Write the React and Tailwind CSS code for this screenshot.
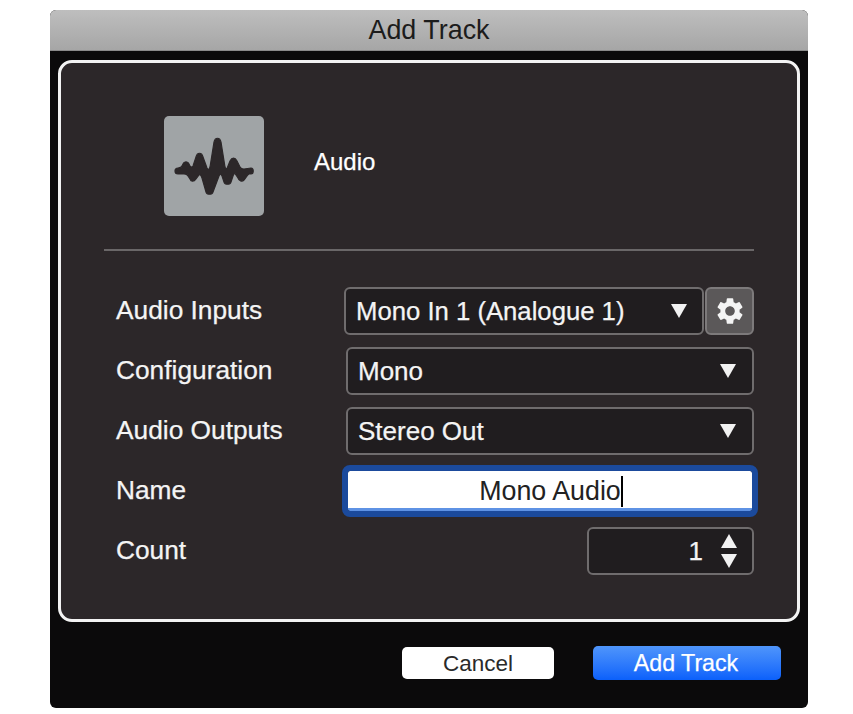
import React from 'react';
import { MdSettings } from 'react-icons/md';

const Caret = ({ className = '' }) => (
  <svg viewBox="0 0 16 14" className={`w-4 h-[14px] fill-[#f2f2f2] ${className}`}>
    <path d="M0 0H16L8 14Z" />
  </svg>
);

const Select = ({ value, className = '' }) => (
  <div className={`h-12 flex items-center justify-between pl-[10px] pr-4 bg-[#201d1f] border-2 border-[#6f6c6d] rounded-md text-[26px] text-[#f4f4f4] [-webkit-text-stroke:0.25px] ${className}`}>
    <span>{value}</span>
    <Caret />
  </div>
);

const Row = ({ label, children }) => (
  <div className="h-12 flex items-center">
    <div className="w-[240px] shrink-0 pl-3 text-[26.3px] text-[#f4f4f4] [-webkit-text-stroke:0.25px]">{label}</div>
    <div className="flex-1 flex justify-end items-center">{children}</div>
  </div>
);

const App = () => {
  return (
    <div className="w-[853px] h-[714px] bg-white pt-[10px] pl-[50px] font-['Liberation_Sans',Arial,sans-serif]">
      <div className="w-[758px] h-[698px] bg-[#0b0a0b] rounded-md flex flex-col overflow-hidden">

        {/* title bar */}
        <div className="h-[41px] shrink-0 flex items-center justify-center bg-gradient-to-b from-[#bebebe] to-[#a6a6a6] border-b border-[#8a8a8a] text-[26.9px] text-[#1c1c1c]">
          Add Track
        </div>

        {/* main panel */}
        <div className="mt-[9px] mx-2 h-[562px] bg-[#2c2729] border-[3px] border-[#f3f3f3] rounded-[14px] px-[43px] pt-[53px]">
          <div className="flex items-center pl-[60px]">
            <div className="w-[100px] h-[100px] bg-[#a0a4a6] rounded-[5px]">
              <svg viewBox="0 0 100 100" className="w-full h-full fill-[#2c2729] stroke-[#2c2729] stroke-[1.2]">
                <path d="M14 52 C17 52 18 51 19 48 C20 45 24 45 25 48 C26 51 28 52 29 50 L32 41 C33 36 38 36 39 41 L43 52 C44 54 45 54 46 51 L50 26 C51 21 56 21 57 26 L61 51 C62 54 63 53 64 50 L66 45 C68 41 71 41 73 45 L76 51 C77 53 78 53 80 53 L87 52 C90 52 90 58 87 58 L85 58 C83 59 82 62 80 64 C78 66 75 65 74 62 L72 59 C71 57 70 57 69 60 L67 66 C66 69 61 69 60 66 L58 60 C57 58 56 58 55 60 L49 76 C48 79 43 79 42 76 L38 62 C37 59 36 58 35 59 L32 63 C30 66 27 66 26 63 L24 60 C23 58 22 58 20 58 L14 58 C10 58 10 52 14 52 Z" />
              </svg>
            </div>
            <div className="ml-[50px] pb-2 text-2xl text-white [-webkit-text-stroke:0.25px]">Audio</div>
          </div>

          <div className="mt-[34px] h-0.5 -translate-y-px bg-[#6a6768]" />

          <div className="mt-[35px] flex flex-col gap-3">
            <Row label="Audio Inputs">
              <Select value="Mono In 1 (Analogue 1)" className="w-[360px] !pr-[15px] !text-[25.7px]" />
              <div className="ml-px w-[49px] h-12 flex items-center justify-center bg-[#5b5859] border-2 border-[#7d7a7b] rounded-md">
                <MdSettings className="text-[#f4f4f4]" size={32} />
              </div>
            </Row>
            <Row label="Configuration">
              <Select value="Mono" className="w-[408px]" />
            </Row>
            <Row label="Audio Outputs">
              <Select value="Stereo Out" className="w-[408px]" />
            </Row>
            <Row label="Name">
              <div className="relative mr-[2px] w-[404px] h-[40px] bg-white border-b-[3px] border-[#5e92e4] flex items-center justify-center outline-[6px] outline-[#1b4a9c] rounded-[2px] text-[26.8px] text-[#222]">
                <span className="relative leading-[31px] mt-[3px]">
                  Mono Audio
                  <span className="absolute -right-[2px] top-0 bottom-0 w-[2px] bg-black" />
                </span>
              </div>
            </Row>
            <Row label="Count">
              <div className="w-[167px] h-12 flex items-center justify-end pr-[15px] bg-[#201d1f] border-2 border-[#6f6c6d] rounded-md text-[26px] text-[#f4f4f4] [-webkit-text-stroke:0.25px]">
                <span className="mr-[18px]">1</span>
                <div className="flex flex-col gap-[6px]">
                  <Caret className="rotate-180 h-[12px]" />
                  <Caret className="h-[12px]" />
                </div>
              </div>
            </Row>
          </div>
        </div>

        {/* footer buttons */}
        <div className="flex-1 flex items-center justify-end pr-[27px] pb-[4px]">
          <button className="w-[152px] h-8 bg-white rounded-[5px] text-[22.5px] text-[#2a2a2a]">Cancel</button>
          <button className="ml-[39px] w-[188px] h-[34px] pr-[2px] bg-gradient-to-b from-[#4f95fb] to-[#0a60fb] rounded-[5px] text-[23.2px] text-white [-webkit-text-stroke:0.25px]">Add Track</button>
        </div>
      </div>
    </div>
  );
};

export default App;
